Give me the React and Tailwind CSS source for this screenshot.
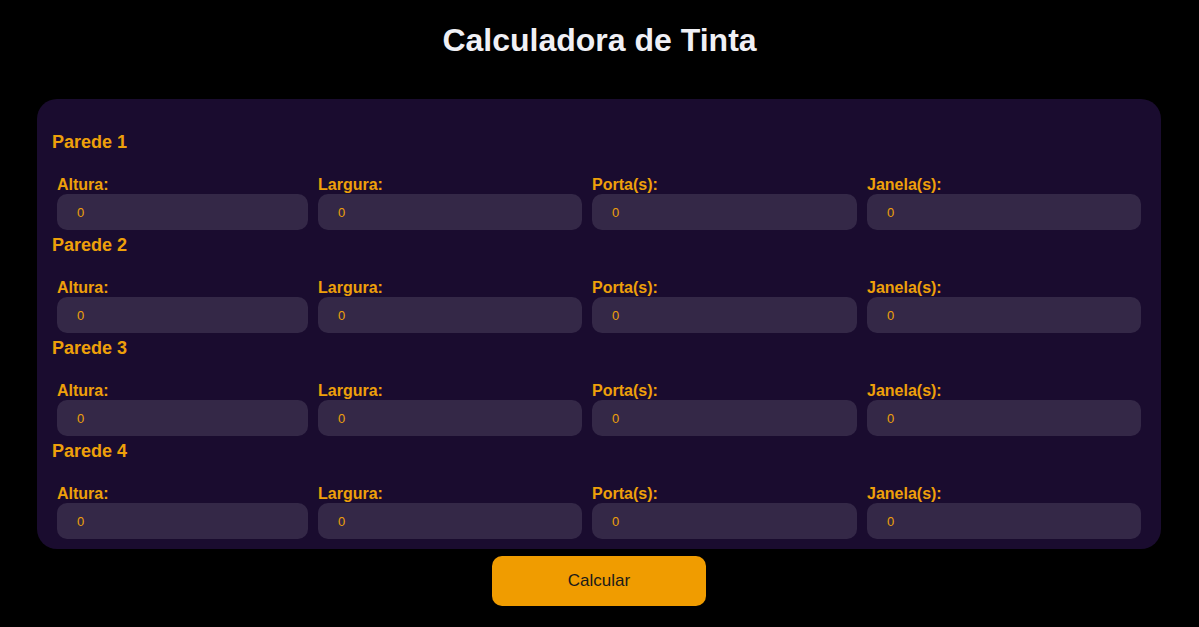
import React from "react";

const fields = ["Altura:", "Largura:", "Porta(s):", "Janela(s):"];

function Wall({ n }) {
  return (
    <div className="flex flex-col">
      <h3 className="h-[22px] text-[18px] leading-[22px] font-bold text-[#eea00a]">Parede {n}</h3>
      <div className="mt-[22px] grid grid-cols-[251px_264px_265px_274px] gap-x-[10px] px-[5px] pb-[4px]">
        {fields.map((f) => (
          <div key={f} className="flex flex-col">
            <label className="h-[19px] text-[16px] leading-[19px] font-bold text-[#eea00a]">{f}</label>
            <input
              type="number"
              defaultValue={0}
              className="h-[36px] w-full rounded-[10px] bg-[#342847] pl-[20px] pt-[1px] text-[13px] text-[#eea00a] outline-none [appearance:textfield]"
            />
          </div>
        ))}
      </div>
    </div>
  );
}

export default function App() {
  return (
    <div className="min-h-[627px] w-full bg-black font-['Liberation_Sans',Arial,sans-serif]">
      <div className="flex flex-col">
        <h1 className="mt-[21px] h-[38px] self-center text-[32px] leading-[38px] font-bold text-[#f0f0f5]">Calculadora de Tinta</h1>
        <div className="mt-[40px] ml-[37px] w-[1124px] rounded-[20px] bg-[#1a0c2f] px-[15px] pt-[32px] pb-[6px]">
          {[1, 2, 3, 4].map((n) => (
            <Wall key={n} n={n} />
          ))}
        </div>
        <button className="mt-[7px] ml-[492px] h-[50px] w-[214px] rounded-[10px] bg-[#f09c00] text-[17px] text-[#1a1a1a]">Calcular</button>
      </div>
    </div>
  );
}
